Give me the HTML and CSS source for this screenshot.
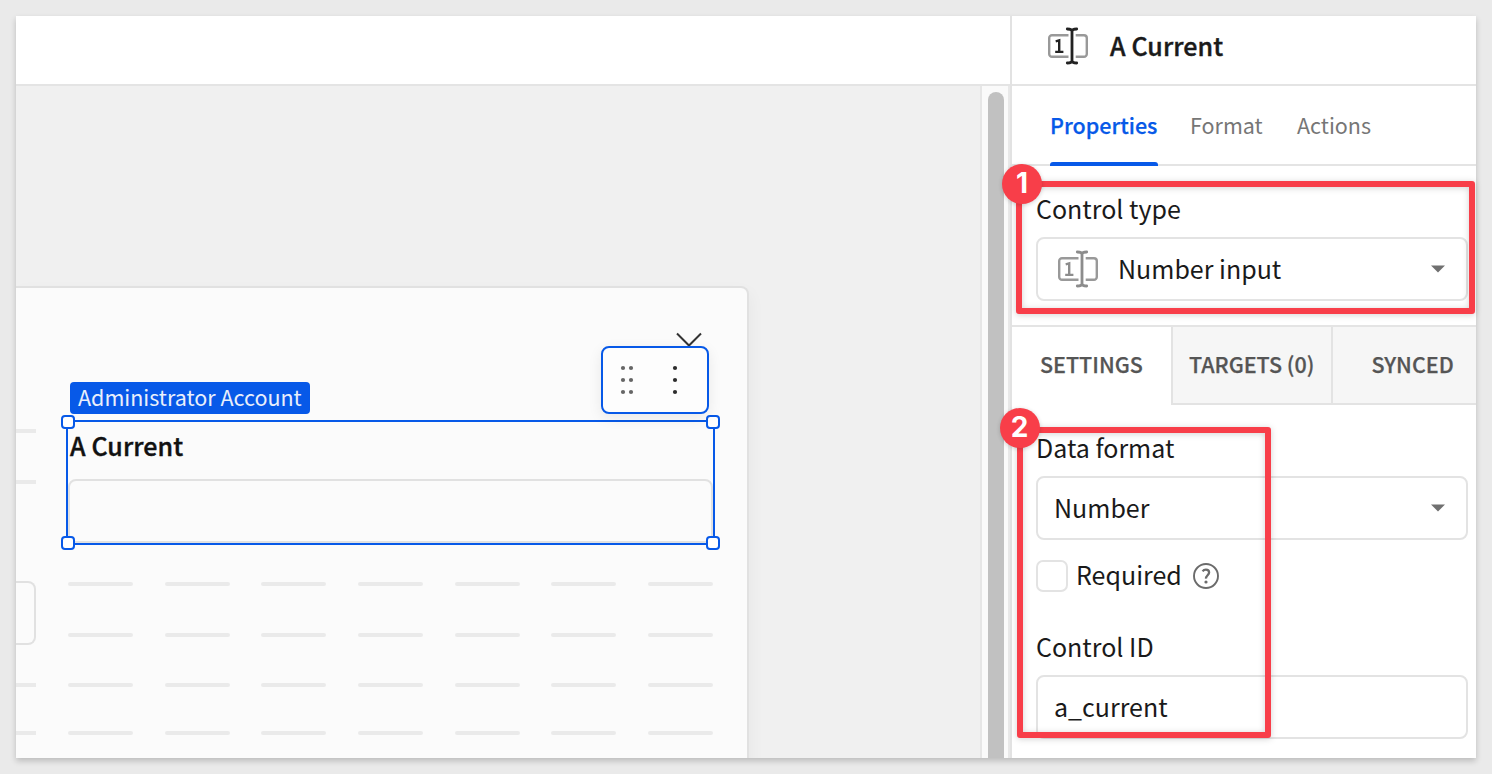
FILE: index.html
```html
<!DOCTYPE html>
<html lang="en">
<head>
<meta charset="utf-8">
<title>Form editor</title>
<link rel="stylesheet" href="styles.css">
</head>
<body>
<svg class="defs" width="0" height="0" aria-hidden="true">
  <symbol id="number-icon" viewBox="0 0 40 38">
    <path class="frame" d="M20.500 8.200H4a2.800 2.800 0 0 0-2.800 2.800v16a2.800 2.800 0 0 0 2.800 2.800H20.500M27.700 8.200H36a2.800 2.800 0 0 1 2.800 2.800v16a2.800 2.800 0 0 1-2.800 2.800H27.700"/>
    <path class="digit" d="M7.700 14.300L11.200 13.400V24.800M7.200 24.900H15.400"/>
    <path class="cursor" d="M19.300 2C22 2 24 2.600 24 4.500V33.500C24 35.400 22 36 19.300 36M28.700 2C26 2 24 2.600 24 4.500M24 33.500C24 35.400 26 36 28.700 36"/>
  </symbol>
</svg>
<div class="app">
  <main class="editor">
    <div class="topbar"></div>
    <div class="workspace">
      <div class="canvas">
        <section class="form-card">
          <div class="neighbor">
            <i class="dash"></i><i class="dash"></i>
            <div class="neighbor-input"></div>
            <i class="dash"></i><i class="dash"></i>
          </div>
          <div class="column">
            <div class="control">
              <div class="control-title">A Current</div>
              <div class="control-input"></div>
              <i class="handle tl"></i><i class="handle tr"></i><i class="handle bl"></i><i class="handle br"></i>
              <span class="tag">Administrator Account</span>
              <svg class="chevron" width="28" height="16" viewBox="0 0 28 16"><path d="M2 1.500L14 13.500L26 1.500"/></svg>
              <div class="toolbar">
                <svg width="104" height="64" viewBox="0 0 104 64">
                  <g fill="#666"><circle cx="20" cy="20" r="2.100"/><circle cx="28" cy="20" r="2.100"/><circle cx="20" cy="32" r="2.100"/><circle cx="28" cy="32" r="2.100"/><circle cx="20" cy="44" r="2.100"/><circle cx="28" cy="44" r="2.100"/></g>
                  <g fill="#2c2c2c"><circle cx="72" cy="20" r="2.100"/><circle cx="72" cy="32" r="2.100"/><circle cx="72" cy="44" r="2.100"/></g>
                </svg>
              </div>
            </div>
            <div class="grid">
              <i></i><i></i><i></i><i></i><i></i><i></i><i></i>
              <i></i><i></i><i></i><i></i><i></i><i></i><i></i>
              <i></i><i></i><i></i><i></i><i></i><i></i><i></i>
              <i></i><i></i><i></i><i></i><i></i><i></i><i></i>
            </div>
          </div>
        </section>
      </div>
      <div class="scrollbar"><div class="thumb"></div></div>
    </div>
  </main>
  <aside class="panel">
    <header class="panel-header">
      <svg class="num-icon dark" width="40" height="38"><use href="#number-icon"/></svg>
      <h1><span>A Current</span></h1>
    </header>
    <nav class="tabs">
      <span class="tab active">Properties</span>
      <span class="tab format">Format</span>
      <span class="tab actions">Actions</span>
    </nav>
    <section class="type-section">
      <div class="label l-type"><span>Control type</span></div>
      <div class="select">
        <svg class="num-icon" width="40" height="38"><use href="#number-icon"/></svg>
        <span class="value v-type">Number input</span>
        <svg class="caret" width="14" height="8" viewBox="0 0 14 8"><path d="M0 .5H14L7 7.500Z"/></svg>
      </div>
    </section>
    <nav class="subtabs">
      <div class="subtab current"><span>SETTINGS</span></div>
      <div class="subtab targets"><span>TARGETS (0)</span></div>
      <div class="subtab synced"><span>SYNCED</span></div>
    </nav>
    <section class="settings">
      <div class="label l-format"><span>Data format</span></div>
      <div class="select">
        <span class="value v-format">Number</span>
        <svg class="caret" width="14" height="8" viewBox="0 0 14 8"><path d="M0 .5H14L7 7.500Z"/></svg>
      </div>
      <div class="check-row">
        <i class="checkbox"></i>
        <span class="required">Required</span>
        <svg class="help" width="26" height="26" viewBox="0 0 26 26"><circle cx="13" cy="13" r="12"/><path class="mark" d="M9.600 8.300C10.500 7 11.600 6.600 12.900 6.600c1.900 0 3.200 1.100 3.200 2.900 0 2.600-3.300 3-3.100 6.100"/><circle class="dot" cx="13" cy="19" r="1.600"/></svg>
      </div>
      <div class="label l-id"><span>Control ID</span></div>
      <div class="select"><span class="value v-id">a_current</span></div>
    </section>
  </aside>
</div>
<div class="callout first"></div>
<div class="callout second"></div>
<div class="badge one">1</div>
<div class="badge two">2</div>
</body>
</html>
```
FILE: styles.css
```css
* { box-sizing: border-box; }
body {
  margin: 0;
  width: 1492px;
  height: 774px;
  padding: 16px;
  overflow: hidden;
  background: #eaeaea;
  font-family: "Noto Sans CJK SC", "Noto Sans", sans-serif;
  font-size: 25px;
  color: #1a1a1a;
}
span { white-space: nowrap; }
.defs { position: absolute; }
.app {
  display: flex;
  width: 1460px;
  height: 742px;
  overflow: hidden;
  background: #fff;
  box-shadow: 0 3px 6px rgba(0, 0, 0, .2);
}

/* Editor */
.editor { width: 996px; display: flex; flex-direction: column; border-right: 2px solid #e2e2e2; }
.topbar { height: 70px; border-bottom: 2px solid #e4e4e4; }
.workspace { display: flex; flex: 1; min-height: 0; }
.canvas { width: 964px; padding-top: 200px; background: #f0f0f0; overflow: hidden; }
.scrollbar {
  width: 30px;
  padding: 6px 4px 0 6px;
  background: #fafafa;
  border-left: 2px solid #e6e6e6;
  border-right: 2px solid #e8e8e8;
}
.thumb { width: 16px; height: 680px; border-radius: 8px 8px 0 0; background: #c1c1c1; }
.form-card {
  display: flex;
  gap: 30px;
  width: 733px;
  height: 500px;
  background: #fbfbfb;
  border: 2px solid #e1e1e1;
  border-left: 0;
  border-radius: 0 8px 0 0;
  box-shadow: 2px 6px 16px rgba(0, 0, 0, .04);
}
.neighbor { width: 20px; padding-top: 141px; }
.dash { display: block; height: 4px; background: #eaeaea; margin-bottom: 47px; }
.neighbor-input {
  height: 64px;
  margin: 97px 0 38px;
  border: 2px solid #e1e1e1;
  border-left: 0;
  border-radius: 0 8px 8px 0;
}
.neighbor-input ~ .dash { margin-bottom: 44px; }
.column { width: 649px; padding-top: 132px; }
.control { position: relative; height: 125px; border: 2px solid #0759e8; }
.control-title {
  height: 57px;
  padding: 4px 0 0 2px;
  line-height: 38px;
  font-weight: 500;
  letter-spacing: .1px;
  -webkit-text-stroke: .4px #111;
  color: #111;
}
.control-input { height: 64px; border: 2px solid #e1e1e1; border-radius: 8px; }
.handle {
  position: absolute;
  width: 14px;
  height: 14px;
  background: #fff;
  border: 2px solid #0759e8;
  border-radius: 4px;
}
.tl { left: -7px; top: -7px; }
.tr { right: -7px; top: -7px; }
.bl { left: -7px; bottom: -7px; }
.br { right: -7px; bottom: -7px; }
.tag {
  position: absolute;
  left: 2px;
  top: -40px;
  width: 240px;
  height: 32px;
  padding-left: 8px;
  border-radius: 4px;
  background: #0759e8;
  color: #e9effb;
  font-size: 21.5px;
  line-height: 30px;
}
.chevron { position: absolute; right: 10px; top: -90px; fill: none; stroke: #333; stroke-width: 2; }
.toolbar {
  position: absolute;
  right: 4px;
  top: -76px;
  width: 108px;
  height: 68px;
  background: #fdfdfd;
  border: 2px solid #0759e8;
  border-radius: 8px;
  box-shadow: 0 4px 14px rgba(0, 0, 0, .08);
}
.toolbar svg { display: block; }
.grid {
  display: grid;
  grid-template-columns: repeat(7, 65px);
  grid-template-rows: 51px 50px 48px 4px;
  justify-content: space-between;
  padding: 37px 2px 0;
}
.grid i { height: 4px; border-radius: 2px; background: #eaeaea; }

/* Properties panel */
.panel { width: 464px; background: #fff; }
.panel-header { display: flex; align-items: center; height: 70px; padding: 0 0 8px 36px; border-bottom: 2px solid #e4e4e4; }
h1 {
  margin: -2px 0 0 22px;
  font-size: 25px;
  line-height: 36px;
  font-weight: 500;
  letter-spacing: .1px;
  -webkit-text-stroke: .4px #1a1a1a;
}
.num-icon { fill: none; flex: none; overflow: visible; color: #8c8c8c; stroke: currentColor; stroke-width: 2.4; }
.num-icon.dark { color: #222; }
.frame { stroke: #999; }
.cursor { stroke-linecap: round; stroke-width: 2.8; }
.tabs { display: flex; height: 80px; padding-left: 38px; border-bottom: 2px solid #e4e4e4; font-size: 21.5px; line-height: 77px; color: #767676; }
.tab { height: 80px; }
.tab.active { position: relative; width: 108px; color: #0759e8; font-weight: 500; margin-right: 32px; -webkit-text-stroke: .25px #0759e8; }
.tab.active::after {
  content: "";
  position: absolute;
  left: 0;
  right: 0;
  bottom: 0;
  height: 4px;
  border-radius: 3px 3px 0 0;
  background: #0759e8;
}
.format { width: 107px; }
.type-section { height: 161px; padding: 25px 8px 0 24px; border-bottom: 2px solid #e4e4e4; }
.label { line-height: 34px; height: 46px; }
.select {
  display: flex;
  align-items: center;
  height: 64px;
  width: 432px;
  padding: 0 21px 0 20px;
  border: 2px solid #e3e3e3;
  border-radius: 8px;
  background: #fff;
}
.value { height: 60px; line-height: 58px; }
.v-type { margin-left: 20px; }
.v-format, .v-id { margin-left: -4px; }
.caret { margin-left: auto; fill: #707070; }
.subtabs {
  display: flex;
  height: 78px;
  font-size: 21.5px;
  font-weight: 500;
  line-height: 73px;
  color: #555;
  -webkit-text-stroke: .25px #555;
}
.subtab { background: #f6f6f6; border-left: 2px solid #e3e3e3; border-bottom: 2px solid #e3e3e3; }
.subtab.current { width: 159px; padding-left: 28px; background: #fff; border: 0; }
.targets { width: 160px; padding-left: 16px; }
.synced { width: 145px; padding-left: 38.5px; }
.settings { padding: 25px 8px 0 24px; }
.check-row { display: flex; align-items: center; height: 32px; margin: 20px 0 37px; }
.checkbox { width: 32px; height: 32px; border: 2px solid #e3e3e3; border-radius: 7px; }
.required { height: 32px; margin: 0 11px 0 8px; line-height: 29px; }
.help { fill: none; stroke: #6b6b6b; stroke-width: 1.9; }
.help .mark { stroke-width: 2.3; }
.help .dot { fill: #6b6b6b; stroke: none; }

/* Annotations laid over the interface */
.callout { position: absolute; border: 6px solid #f83e49; border-radius: 3px; filter: drop-shadow(0 1px 3px rgba(0, 0, 0, .18)); }
.first { left: 1016px; top: 180.500px; width: 459px; height: 133.500px; }
.second { left: 1017px; top: 426.500px; width: 254px; height: 311px; }
.badge {
  position: absolute;
  width: 40px;
  height: 40px;
  border-radius: 50%;
  background: #f83e49;
  color: #fff;
  font: 700 28px/39px Inter, "Liberation Sans", sans-serif;
  text-align: center;
  box-shadow: 0 1px 4px rgba(0, 0, 0, .18);
}
.one { left: 1002px; top: 163.500px; }
.two { left: 999.500px; top: 408px; }
```
